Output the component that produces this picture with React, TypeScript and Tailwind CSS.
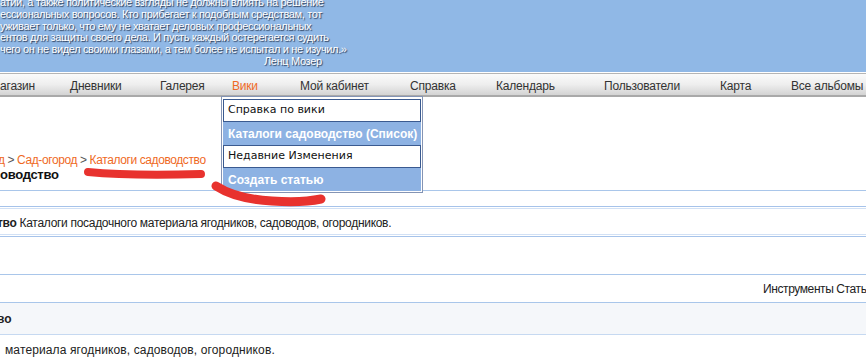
import React from "react"

const quote = [
  "атии, а также политические взгляды не должны влиять на решение",
  "ессиональных вопросов. Кто прибегает к подобным средствам, тот",
  "уживает только, что ему не хватает деловых профессиональных",
  "ентов для защиты своего дела. И пусть каждый остерегается судить",
  " чего он не видел своими глазами, а тем более не испытал и не изучил.»",
]

const nav = [
  { label: "агазин", w: "w-[70px]" },
  { label: "Дневники", w: "w-[90px]" },
  { label: "Галерея", w: "w-[72px]" },
  { label: "Вики", w: "w-[68px]", active: true },
  { label: "Мой кабинет", w: "w-[110px]" },
  { label: "Справка", w: "w-[86px]" },
  { label: "Календарь", w: "w-[108px]" },
  { label: "Пользователи", w: "w-[116px]" },
  { label: "Карта", w: "w-[71px]" },
  { label: "Все альбомы", w: "w-[75px]" },
]

const menu = [
  { label: "Справка по вики", hl: false },
  { label: "Каталоги садоводство (Список)", hl: true },
  { label: "Недавние Изменения", hl: false },
  { label: "Создать статью", hl: true },
]

const App = () => {
  return (
    <div className="relative w-[866px] h-[364px] overflow-hidden bg-white font-['Liberation_Sans',Arial,sans-serif] text-[#222]">
      {/* header with quote */}
      <div className="h-[72px] bg-[#90b8e6] overflow-hidden">
        <div className="-mt-[3px] text-[11px] leading-[11.8px] tracking-[-0.35px] text-white whitespace-nowrap [text-shadow:1px_1px_1px_#2a3a55]">
          {quote.map((q, i) => (
            <div key={i}>{q}</div>
          ))}
          <div className="pl-[264px]">Ленц Мозер</div>
        </div>
      </div>
      <div className="h-px bg-white" />
      <div className="h-px bg-[#b5b5b5]" />

      {/* nav */}
      <div className="h-[23px] flex items-center pt-[3px] text-[12px] tracking-[-0.2px] text-[#333] whitespace-nowrap bg-gradient-to-b from-[#fbfbfb] via-[#eeeeee] to-[#d3d3d3] border-b-2 border-[#a9a9a9]">
        {nav.map((n) => (
          <div key={n.label} className={`${n.w} shrink-0 ${n.active ? "text-[#ef6a26]" : ""}`}>
            {n.label}
          </div>
        ))}
      </div>

      {/* breadcrumb + title */}
      <div className="pt-[56px] pb-[7px] border-b border-[#a9c6ea]">
        <div className="h-[14px] leading-[14px] text-[12px] tracking-[-0.4px] whitespace-nowrap">
          <span className="text-[#ef6a1f] -ml-[2px]">д</span>
          <span className="text-[#555]"> &gt; </span>
          <span className="text-[#ef6a1f]">Сад-огород</span>
          <span className="text-[#555]"> &gt; </span>
          <span className="text-[#ef6a1f]">Каталоги садоводство</span>
        </div>
        <div className="h-[16px] leading-[16px] text-[13px] font-bold tracking-[-0.3px] text-[#111]">оводство</div>
      </div>

      {/* description table */}
      <div className="mt-[15px] border border-x-0 border-[#a6c3ea] py-px">
        <div className="h-[27px] border-y border-[#d2e1f5] flex items-center pt-[2px] text-[12px] tracking-[-0.3px] whitespace-nowrap">
          <span className="font-bold -ml-[3px]">тво</span>
          <span>&nbsp;Каталоги посадочного материала ягодников, садоводов, огородников.</span>
        </div>
      </div>

      <div className="mt-[37px] border-t border-[#a9c6ea]">
        <div className="h-[27px] flex items-center pl-[763px] text-[12px] tracking-[-0.4px] whitespace-nowrap">Инструменты Статьи</div>
      </div>
      <div className="h-[33px] bg-[#f5f7fa] border-y border-[#a9c6ea] border-b-[#c6d9f1] flex items-center text-[12px] font-bold -ml-[3px]">
        во
      </div>
      <div className="h-[30px] flex items-center pl-[5px] text-[12px] tracking-[0.12px] whitespace-nowrap">
        материала ягодников, садоводов, огородников.
      </div>

      {/* dropdown menu */}
      <div className="absolute left-[221px] top-[96px] w-[202px] border border-[#8494b4] bg-white px-px pt-[2px] pb-px">
        {menu.map((m) => (
          <div
            key={m.label}
            className={
              m.hl
                ? "h-[23px] flex items-center pl-[4px] bg-[#8db2e3] border border-[#8db2e3] text-white font-bold text-[12px] whitespace-nowrap"
                : "h-[23px] flex items-center pl-[4px] bg-white border border-[#3a5a90] text-[#111] text-[11px] font-['DejaVu_Sans',Verdana,sans-serif] whitespace-nowrap"
            }
          >
            {m.label}
          </div>
        ))}
      </div>

      {/* red marker annotations */}
      <svg className="absolute left-0 top-0 pointer-events-none" width="866" height="364">
        <path d="M88 172 Q 130 176 201 174" stroke="#e8322e" strokeWidth="8" fill="none" strokeLinecap="round" />
        <path d="M216 186 Q 236 199 272 201 Q 302 203 321 199" stroke="#e8322e" strokeWidth="9" fill="none" strokeLinecap="round" />
      </svg>
    </div>
  )
}

export default App
